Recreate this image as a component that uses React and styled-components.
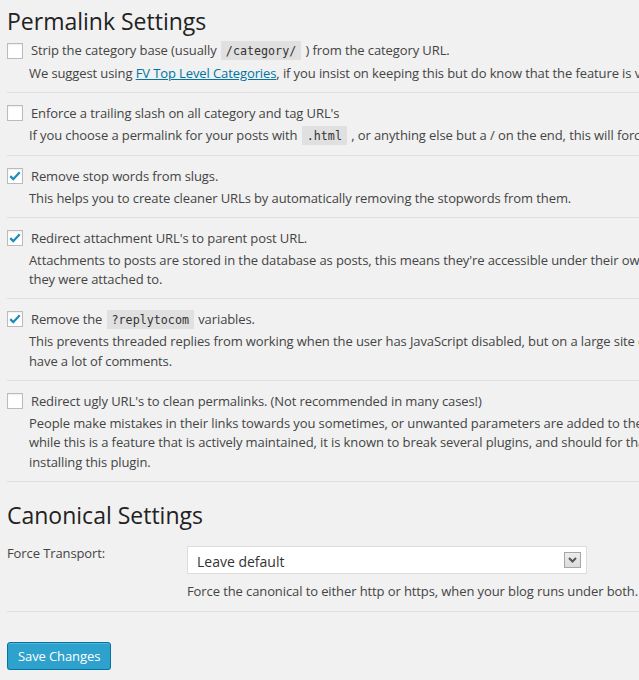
import React from "react";
import styled, { createGlobalStyle } from "styled-components";

const GlobalStyle = createGlobalStyle`
  html, body {
    margin: 0;
    overflow: hidden;
    background: #f1f1f1;
  }
  body {
    font-family: "Open Sans", "Liberation Sans", sans-serif;
    font-size: 13px;
    letter-spacing: -0.1px;
    color: #444;
  }
`;

const Page = styled.div`
  width: 1400px;
  padding-left: 7px;
`;

const Title = styled.h2`
  margin: ${(p) => (p.$spaced ? "12.5px 0 0" : "0")};
  padding-top: 10.5px;
  font-size: 23px;
  font-weight: 400;
  line-height: 20px;
  letter-spacing: 0;
  color: #222;
`;

const Row = styled.div`
  padding: 12px 0 8.5px;
  border-bottom: 1px solid #dfdfdf;
`;

const LabelLine = styled.label`
  display: flex;
  align-items: center;
  gap: 8px;
  height: 16px;
  line-height: 16px;
  white-space: nowrap;
`;

const Box = styled.span`
  flex: none;
  width: 16px;
  height: 16px;
  box-sizing: border-box;
  border: 1px solid #bbb;
  background: #fff;
  box-shadow: inset 0 1px 2px rgba(0, 0, 0, 0.07);
  display: flex;
  align-items: center;
  justify-content: center;
`;

const Desc = styled.p`
  margin: 5px 0 0;
  padding-left: 22px;
  line-height: 19.5px;
  white-space: nowrap;
`;

const Code = styled.code`
  padding: 3px 5px 2px;
  margin: 0 1px;
  background: rgba(0, 0, 0, 0.07);
  font-family: "DejaVu Sans Mono", "Liberation Mono", monospace;
  font-size: 11.7px;
  letter-spacing: 0;
  color: #333;
`;

const Link = styled.a`
  color: #0074a2;
  text-decoration: underline;
`;

const FieldRow = styled.div`
  display: flex;
  padding: 21px 0 9.5px;
  border-bottom: 1px solid #dfdfdf;
`;

const FieldLabel = styled.div`
  width: 180px;
  line-height: 14px;
`;

const Field = styled.div`
  display: flex;
  flex-direction: column;
`;

const SelectWrap = styled.div`
  position: relative;
  width: 400px;
  height: 28px;
`;

const Select = styled.select`
  appearance: none;
  width: 100%;
  height: 28px;
  box-sizing: border-box;
  margin: 0;
  padding: 3px 30px 0 9px;
  border: 1px solid #ddd;
  border-radius: 0;
  background: #fff;
  font-family: "Open Sans", "Liberation Sans", sans-serif;
  font-size: 14px;
  color: #333;
  outline: none;
`;

const Arrow = styled.span`
  position: absolute;
  right: 6px;
  top: 6px;
  width: 17px;
  height: 16px;
  box-sizing: border-box;
  border: 1px solid #a6a6a6;
  background: linear-gradient(#ececec, #dcdcdc);
  display: flex;
  align-items: center;
  justify-content: center;
  pointer-events: none;
`;

const FieldDesc = styled.p`
  margin: 8px 0 0;
  line-height: 19.5px;
  white-space: nowrap;
`;

const Button = styled.button`
  margin-top: 30px;
  height: 28px;
  padding: 0 10px 1px;
  box-sizing: border-box;
  border: 1px solid #0074a2;
  border-radius: 3px;
  background: #2ea2cc;
  box-shadow: inset 0 1px 0 rgba(120, 200, 230, 0.5),
    0 1px 0 rgba(0, 0, 0, 0.15);
  color: #fff;
  font-family: "Open Sans", "Liberation Sans", sans-serif;
  font-size: 13px;
  letter-spacing: -0.1px;
  line-height: 26px;
  cursor: pointer;
`;

const Check = ({ checked }) => (
  <Box>
    {checked && (
      <svg width="14" height="14" viewBox="0 0 16 16">
        <path
          d="M2.6 8.2 L6 11.6 L13.4 3.6"
          fill="none"
          stroke="#1e8cbe"
          strokeWidth="2.6"
        />
      </svg>
    )}
  </Box>
);

const options = [
  {
    checked: false,
    label: (
      <>
        Strip the category base (usually <Code>/category/</Code> ) from the category URL.
      </>
    ),
    desc: (
      <>
        We suggest using <Link href="#">FV Top Level Categories</Link>, if you insist on
        keeping this but do know that the feature is very likely to break in future WordPress versions.
      </>
    ),
  },
  {
    checked: false,
    label: "Enforce a trailing slash on all category and tag URL's",
    desc: (
      <>
        If you choose a permalink for your posts with <Code>.html</Code> , or anything else but a / on
        the end, this will force WordPress to add a trailing slash to non-post pages nonetheless.
      </>
    ),
  },
  {
    checked: true,
    label: "Remove stop words from slugs.",
    desc: "This helps you to create cleaner URLs by automatically removing the stopwords from them.",
  },
  {
    checked: true,
    label: "Redirect attachment URL's to parent post URL.",
    desc: (
      <>
        Attachments to posts are stored in the database as posts, this means they're accessible under
        their own URL's if you do not redirect them, enabling this will redirect them to the post
        <br />
        they were attached to.
      </>
    ),
  },
  {
    checked: true,
    label: (
      <>
        Remove the <Code>?replytocom</Code> variables.
      </>
    ),
    desc: (
      <>
        This prevents threaded replies from working when the user has JavaScript disabled, but on a large
        site can mean a huge improvement in crawl efficiency for search engines when you
        <br />
        have a lot of comments.
      </>
    ),
  },
  {
    checked: false,
    label: "Redirect ugly URL's to clean permalinks. (Not recommended in many cases!)",
    desc: (
      <>
        People make mistakes in their links towards you sometimes, or unwanted parameters are added to
        the URLs, this clears them up. Note that
        <br />
        while this is a feature that is actively maintained, it is known to break several plugins, and
        should for that reason be the first feature you disable when you encounter issues after
        <br />
        installing this plugin.
      </>
    ),
  },
];

export default function App() {
  return (
    <Page>
      <GlobalStyle />
      <Title>Permalink Settings</Title>
      {options.map((o, i) => (
        <Row key={i}>
          <LabelLine>
            <Check checked={o.checked} />
            <span>{o.label}</span>
          </LabelLine>
          <Desc>{o.desc}</Desc>
        </Row>
      ))}

      <Title $spaced>Canonical Settings</Title>
      <FieldRow>
        <FieldLabel>Force Transport:</FieldLabel>
        <Field>
          <SelectWrap>
            <Select defaultValue="default">
              <option value="default">Leave default</option>
              <option value="http">Force http</option>
              <option value="https">Force https</option>
            </Select>
            <Arrow>
              <svg width="9" height="6" viewBox="0 0 9 6">
                <path d="M1 1 L4.5 4.5 L8 1" fill="none" stroke="#555" strokeWidth="2" />
              </svg>
            </Arrow>
          </SelectWrap>
          <FieldDesc>
            Force the canonical to either http or https, when your blog runs under both.
          </FieldDesc>
        </Field>
      </FieldRow>

      <Button type="button">Save Changes</Button>
    </Page>
  );
}
